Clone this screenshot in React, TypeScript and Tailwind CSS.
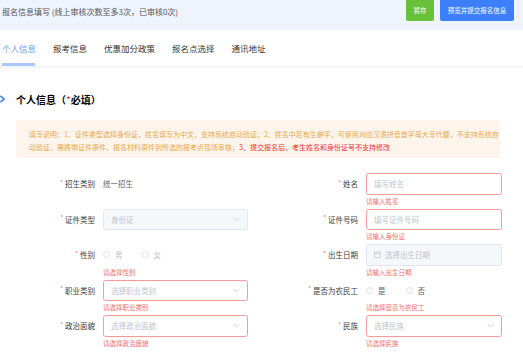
import React from "react";

const F = { fontFamily: '"Noto Sans CJK SC", "Noto Sans", sans-serif' };

function Chevron() {
  return (
    <svg width="7" height="5" viewBox="0 0 7 5" className="shrink-0">
      <path d="M0.8 1 L3.5 3.8 L6.2 1" fill="none" stroke="#c0c4cc" strokeWidth="0.8" />
    </svg>
  );
}

function Label({ text }: { text: string }) {
  return (
    <div className="h-[21.5px] flex items-center justify-end text-[7.5px] text-[#3a3c40]">
      <span className="text-[#f56c6c] mr-[2px] text-[6px] -mt-[3px]">*</span>
      {text}
    </div>
  );
}

function Err({ text }: { text?: string }) {
  return <div className="h-[14px] leading-[13px] text-[6.5px] text-[#f56c6c]">{text ?? ""}</div>;
}

function Box({
  text,
  error,
  disabled,
  select,
  date,
}: {
  text: string;
  error?: boolean;
  disabled?: boolean;
  select?: boolean;
  date?: boolean;
}) {
  return (
    <div
      className={
        "h-[21.5px] rounded-[2.5px] border flex items-center px-[7px] text-[7.5px] text-[#c0c4cc] " +
        (error ? "border-[#f89a9a] " : "border-[#e4e7ed] ") +
        (disabled ? "bg-[#f5f7fa]" : "bg-white")
      }
    >
      {date && (
        <svg width="7" height="7" viewBox="0 0 7 7" className="mr-[4px] shrink-0">
          <rect x="0.5" y="1" width="6" height="5.5" fill="none" stroke="#c0c4cc" strokeWidth="0.7" />
          <line x1="0.5" y1="2.6" x2="6.5" y2="2.6" stroke="#c0c4cc" strokeWidth="0.7" />
        </svg>
      )}
      <span className="flex-1">{text}</span>
      {select && <Chevron />}
    </div>
  );
}

function Radio({ a, b, muted, gap }: { a: string; b: string; muted?: boolean; gap: string }) {
  const c = muted ? "text-[#c0c4cc]" : "text-[#606266]";
  return (
    <div className={"h-[21.5px] flex items-center text-[7.5px] " + c}>
      <span className="w-[7px] h-[7px] rounded-full border border-[#dcdfe6] bg-white mr-[5px]" />
      <span className={gap}>{a}</span>
      <span className="w-[7px] h-[7px] rounded-full border border-[#dcdfe6] bg-white mr-[5px]" />
      <span>{b}</span>
    </div>
  );
}

export default function App() {
  return (
    <div className="w-[523px] h-[352px] bg-white overflow-hidden relative" style={F}>
      {/* Top bar */}
      <div className="h-[30px] bg-[#eff3fc] flex items-start">
        <div className="pl-[2px] pt-[6px] text-[8px] leading-[12px] text-[#555]">
          报名信息填写 (线上审核次数至多3次，已审核0次)
        </div>
        <div className="ml-auto flex gap-[6px] pr-[9px]">
          <div className="w-[28px] h-[21px] bg-[#67c23a] rounded-b-[2px] flex items-center justify-center text-white text-[6.5px]">
            暂存
          </div>
          <div className="w-[74px] h-[21px] bg-[#3d7ffb] rounded-b-[2px] flex items-center justify-center text-white text-[6.5px]">
            预览并提交报名信息
          </div>
        </div>
      </div>

      {/* Tabs */}
      <div className="h-[36px] flex pl-[2px] gap-[17px] text-[8.5px] text-[#333]">
        <div className="relative h-full flex items-center text-[#6a9ff5]">
          个人信息
          <div className="absolute left-0 right-[1px] bottom-[0.5px] h-[3px] bg-[#a9c7f7]" />
        </div>
        <div className="h-full flex items-center">报考信息</div>
        <div className="h-full flex items-center">优惠加分政策</div>
        <div className="h-full flex items-center">报名点选择</div>
        <div className="h-full flex items-center">通讯地址</div>
      </div>
      <div className="h-[2px] bg-[#f3f4f6]" />

      {/* Section header */}
      <div className="h-[26px] mt-[18px] flex items-center">
        <svg width="5" height="8" viewBox="0 0 5 8" className="ml-0 mr-[11px]">
          <path d="M0.5 0.8 L4 4 L0.5 7.2" fill="none" stroke="#3d7ffb" strokeWidth="1.6" />
        </svg>
        <span className="text-[10px] font-bold text-black">
          个人信息（<span className="text-[#e02020] font-normal">*</span>必填）
        </span>
      </div>

      {/* Notice */}
      <div className="ml-[16px] mt-[8px] w-[484px] h-[38px] bg-[#fdf5ec] rounded-[2px] pl-[13px] pt-[8px] text-[7px] leading-[13px] text-[#e9a94b] whitespace-nowrap overflow-hidden">
        填写说明：1、证件类型选择身份证，姓名填写为中文，支持系统自动验证；2、姓名中若有生僻字，可使用对应汉语拼音首字母大写代替，不支持系统自
        <br />
        动验证，需携带证件原件、报名材料原件到所选的报考点现场审核；
        <span className="text-[#f23030]">3、提交报名后，考生姓名和身份证号不支持修改</span>
      </div>

      {/* Form */}
      <div className="mt-[15px] grid grid-cols-[95px_145px_102px_136px] gap-x-2">
        <Label text="招生类别" />
        <div className="h-[21.5px] flex items-center text-[7.5px] text-[#606266]">统一招生</div>
        <Label text="姓名" />
        <div>
          <Box text="填写姓名" error />
          <Err text="请输入姓名" />
        </div>

        <Label text="证件类型" />
        <div>
          <Box text="身份证" disabled select />
          <Err />
        </div>
        <Label text="证件号码" />
        <div>
          <Box text="填写证件号码" error />
          <Err text="请输入身份证" />
        </div>

        <Label text="性别" />
        <div>
          <Radio a="男" b="女" muted gap="mr-[19px]" />
          <Err text="请选择性别" />
        </div>
        <Label text="出生日期" />
        <div>
          <Box text="选择出生日期" disabled date />
          <Err text="请输入出生日期" />
        </div>

        <Label text="职业类别" />
        <div>
          <Box text="选择职业类别" error select />
          <Err text="请选择职业类别" />
        </div>
        <Label text="是否为农民工" />
        <div>
          <Radio a="是" b="否" gap="mr-[20px]" />
          <Err text="请选择是否为农民工" />
        </div>

        <Label text="政治面貌" />
        <div>
          <Box text="选择政治面貌" error select />
          <Err text="请选择政治面貌" />
        </div>
        <Label text="民族" />
        <div>
          <Box text="选择民族" error select />
          <Err text="请选择民族" />
        </div>
      </div>
    </div>
  );
}
